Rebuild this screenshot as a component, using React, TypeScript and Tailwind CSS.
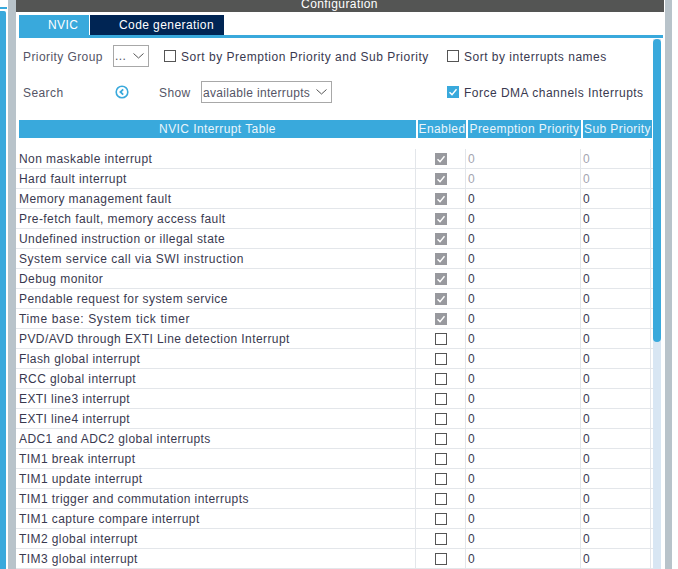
const rows: [string, boolean][] = [
  ["Non maskable interrupt", true],
  ["Hard fault interrupt", true],
  ["Memory management fault", true],
  ["Pre-fetch fault, memory access fault", true],
  ["Undefined instruction or illegal state", true],
  ["System service call via SWI instruction", true],
  ["Debug monitor", true],
  ["Pendable request for system service", true],
  ["Time base: System tick timer", true],
  ["PVD/AVD through EXTI Line detection Interrupt", false],
  ["Flash global interrupt", false],
  ["RCC global interrupt", false],
  ["EXTI line3 interrupt", false],
  ["EXTI line4 interrupt", false],
  ["ADC1 and ADC2 global interrupts", false],
  ["TIM1 break interrupt", false],
  ["TIM1 update interrupt", false],
  ["TIM1 trigger and commutation interrupts", false],
  ["TIM1 capture compare interrupt", false],
  ["TIM2 global interrupt", false],
  ["TIM3 global interrupt", false],
];

function Check({ on, color }: { on: boolean; color: string }) {
  if (!on) {
    return <span className="block w-3 h-3 border border-[#555555] bg-white" />;
  }
  return (
    <span className={`flex w-3 h-3 items-center justify-center ${color}`}>
      <svg width="10" height="10" viewBox="0 0 10 10" fill="none">
        <path d="M1.5 5.2 L4 7.6 L8.5 2.2" stroke="white" strokeWidth="1.4" />
      </svg>
    </span>
  );
}

function Chevron() {
  return (
    <svg width="11" height="6" viewBox="0 0 11 6" fill="none">
      <path d="M0.5 0.5 L5.5 5 L10.5 0.5" stroke="#555555" />
    </svg>
  );
}

export default function App() {
  return (
    <div className="w-[678px] h-[569px] overflow-hidden bg-white flex font-['Liberation_Sans',Arial,sans-serif] text-[12px] tracking-[0.42px] text-[#39394f]">
      {/* left edge of the neighbouring panels */}
      <div className="w-[8px] pt-[7px] shrink-0 flex flex-col">
        <div className="w-[7px] h-[2px] bg-[#39a9dc]" />
        <div className="mt-[2px] w-[6px] flex-1 bg-[#39a9dc] rounded-tr-[2px]" />
      </div>
      <div className="w-[8px] bg-[#b8c3ca] shrink-0" />

      <div className="w-[648px] shrink-0 flex flex-col">
        <div className="h-[12px] bg-[#545554] flex items-start justify-center overflow-hidden">
          <span className="text-white leading-[14px] mt-[-3px] pr-[1px]">Configuration</span>
        </div>

        <div className="mt-[3px] ml-[3px] h-[20px] flex gap-[1px] text-white">
          <div className="w-[70px] bg-[#39a9dc] pl-[29px] leading-[20px]">NVIC</div>
          <div className="w-[134px] bg-[#002554] pl-[29px] leading-[20px]">Code generation</div>
        </div>
        <div className="ml-[3px] mr-[1px] h-[3px] bg-[#39a9dc]" />

        <div className="relative flex-1 pl-[3px]">
          {/* scrollbar */}
          <div className="absolute left-[637px] top-[1px] bottom-0 w-[8px] bg-[#d8e6f3]">
            <div className="h-[303px] bg-[#39a9dc] rounded-[4px]" />
          </div>

          <div className="w-[634px] pt-[8px]">
            <div className="flex items-center h-[20px]">
              <span className="ml-[4px] mt-[2px] w-[90px] text-[#555566]">Priority Group</span>
              <span className="w-[36px] h-[22px] border border-[#a8a8a8] flex items-center justify-between pl-[1px] pr-[4px] text-[#555566]">
                ...
                <Chevron />
              </span>
              <span className="ml-[15px]"><Check on={false} color="" /></span>
              <span className="ml-[5px] mt-[2px] w-[266px] tracking-[0.52px]">Sort by Premption Priority and Sub Priority</span>
              <span><Check on={false} color="" /></span>
              <span className="ml-[5px] mt-[2px] tracking-[0.5px]">Sort by interrupts names</span>
            </div>
            <div className="flex items-center h-[22px] mt-[15px]">
              <span className="ml-[4px] mt-[2px] w-[92px] text-[#555566]">Search</span>
              <svg width="14" height="14" viewBox="0 0 14 14" fill="none">
                <circle cx="7" cy="7" r="5.8" stroke="#39a9dc" strokeWidth="1.6" />
                <path d="M8.2 4.3 L5.4 7 L8.2 9.7" stroke="#39a9dc" strokeWidth="1.8" />
              </svg>
              <span className="ml-[30px] mt-[2px] w-[42px] text-[#555566]">Show</span>
              <span className="w-[131px] h-[22px] border border-[#a8a8a8] flex items-center justify-between pl-[1px] pr-[4px] text-[#555566] tracking-[0.32px]">
                <span className="mt-[2px]">available interrupts</span>
                <Chevron />
              </span>
              <span className="ml-[115px]"><Check on={true} color="bg-[#39a9dc]" /></span>
              <span className="ml-[5px] mt-[2px] tracking-[0.49px]">Force DMA channels Interrupts</span>
            </div>

            <div className="mt-[17px] flex h-[18px] text-[#eaf5fb] leading-[19px] whitespace-nowrap">
              <div className="w-[397px] bg-[#39a9dc] text-center">NVIC Interrupt Table</div>
              <div className="ml-[2px] w-[48px] bg-[#39a9dc] text-center overflow-hidden">Enabled</div>
              <div className="ml-[2px] w-[113px] bg-[#39a9dc] text-center overflow-hidden">Preemption Priority</div>
              <div className="ml-[2px] w-[69px] bg-[#39a9dc] text-center overflow-hidden">Sub Priority</div>
            </div>

            <div className="mt-[11px] ml-[-3px]">
              {rows.map(([name, on], i) => {
                const muted = i < 2;
                // these two lines run a little wider in the original
                const wide = i === 8 ? "tracking-[0.63px]" : i === 5 ? "tracking-[0.5px]" : "";
                return (
                  <div key={name} className="flex h-[20px] border-b border-[#e3e6ea] leading-[20px]">
                    <div className={`w-[399px] pl-[3px] whitespace-nowrap ${wide}`}>{name}</div>
                    <div className="w-[50px] border-l border-[#e3e6ea] flex items-center justify-center">
                      <Check on={on} color="bg-[#98999e]" />
                    </div>
                    <div className="w-[115px] border-l border-[#e3e6ea] pl-[2px]">
                      <span className={muted ? "text-[#a5a5b0]" : ""}>0</span>
                    </div>
                    <div className="w-[71px] border-l border-r border-[#e3e6ea] pl-[2px]">
                      <span className={muted ? "text-[#a5a5b0]" : ""}>0</span>
                    </div>
                  </div>
                );
              })}
            </div>
          </div>
        </div>
      </div>

      <div className="w-[1px] shrink-0" />
      <div className="w-[7px] bg-[#b8c3ca] shrink-0" />
    </div>
  );
}
